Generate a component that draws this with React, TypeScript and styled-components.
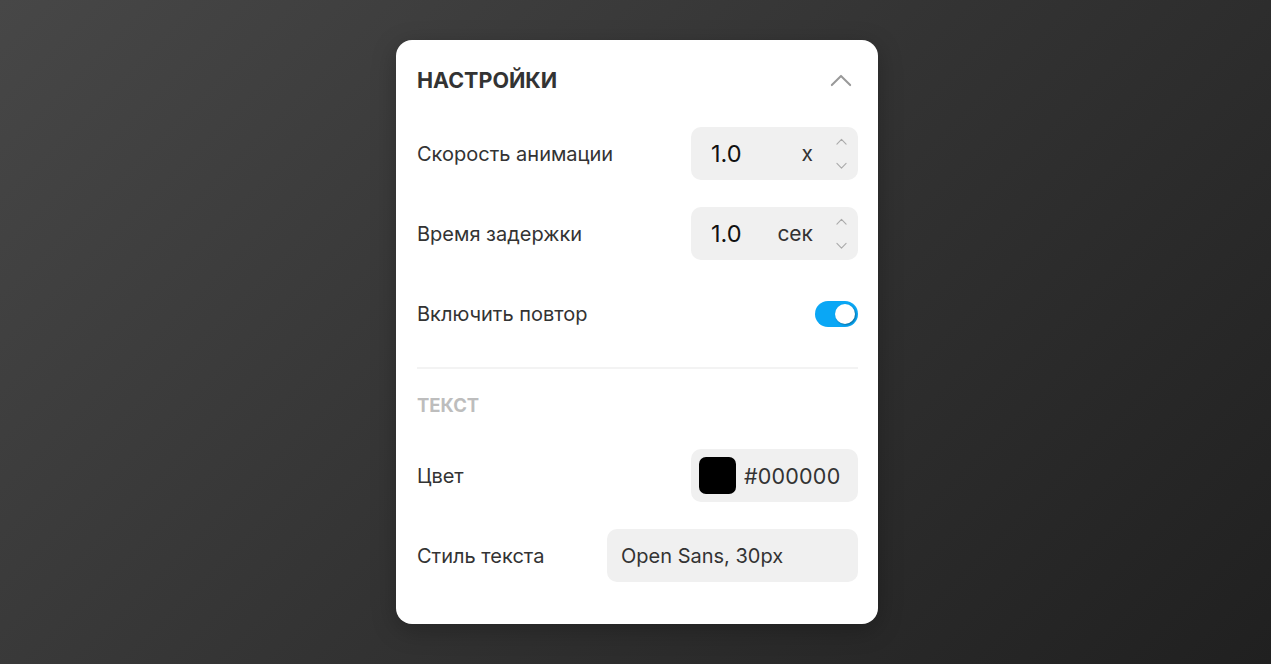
import React, { useState } from "react";
import styled, { createGlobalStyle } from "styled-components";

const GlobalStyle = createGlobalStyle`
  html, body {
    margin: 0;
    height: 100%;
  }
  body {
    font-family: Inter, "Noto Sans", sans-serif;
    background: linear-gradient(135deg, #474747 0%, #333 50%, #202020 100%);
  }
  #root {
    min-height: 100%;
  }
`;

const Page = styled.main`
  min-height: 664px;
  display: flex;
  justify-content: center;
  align-items: flex-start;
  padding-top: 40px;
  box-sizing: border-box;
`;

const Card = styled.section`
  width: 482px;
  margin-left: 3px;
  box-sizing: border-box;
  background: #fff;
  border-radius: 16px;
  padding: 22px 20px 42px 21px;
  box-shadow: 0 6px 24px rgba(0, 0, 0, 0.25);
`;

const Header = styled.header`
  display: flex;
  justify-content: space-between;
  align-items: center;
  height: 36px;
  margin-bottom: 29px;
`;

const Title = styled.h2`
  margin: 0;
  font-size: 21.5px;
  font-weight: 700;
  color: #333;
`;

const Collapse = styled.button`
  border: 0;
  background: none;
  padding: 0;
  width: 26px;
  height: 26px;
  display: flex;
  align-items: center;
  justify-content: center;
  margin-right: 4px;
  cursor: pointer;
`;

const Row = styled.div`
  display: flex;
  align-items: center;
  justify-content: space-between;
  height: 53px;
  & + & {
    margin-top: 27px;
  }
`;

const Label = styled.span`
  font-size: 20px;
  color: #333;
`;

const Field = styled.div<{ $width?: number }>`
  width: ${({ $width }) => $width ?? 167}px;
  height: 53px;
  box-sizing: border-box;
  background: #f0f0f0;
  border-radius: 10px;
  display: flex;
  align-items: center;
`;

const NumberValue = styled.span`
  font-size: 23.5px;
  color: #111;
  margin-left: 20px;
  flex: 1;
`;

const Unit = styled.span`
  font-size: 21px;
  color: #333;
  margin-right: 22px;
`;

const Stepper = styled.div`
  display: flex;
  flex-direction: column;
  justify-content: center;
  align-items: center;
  gap: 16px;
  width: 12px;
  margin-right: 11px;
`;

const Toggle = styled.button<{ $on: boolean }>`
  width: 43px;
  height: 26px;
  border-radius: 13px;
  border: 0;
  padding: 0;
  background: ${({ $on }) => ($on ? "#0aa7f5" : "#ccc")};
  display: flex;
  align-items: center;
  justify-content: ${({ $on }) => ($on ? "flex-end" : "flex-start")};
  cursor: pointer;
`;

const Knob = styled.span`
  width: 20px;
  height: 20px;
  border-radius: 50%;
  background: #fff;
  margin: 0 3px;
  box-shadow: 1px 1px 2px rgba(0, 0, 0, 0.35);
`;

const Divider = styled.hr`
  border: 0;
  height: 2px;
  background: #f3f3f3;
  margin: 27px 0 24px;
`;

const SectionTitle = styled.h3`
  margin: 0 0 32px;
  font-size: 18.5px;
  font-weight: 700;
  color: #bdbdbd;
  height: 24px;
  line-height: 24px;
`;

const Swatch = styled.span<{ $color: string }>`
  width: 37px;
  height: 37px;
  border-radius: 7px;
  background: ${({ $color }) => $color};
  margin: 0 8px;
`;

const ColorText = styled.span`
  font-size: 21.5px;
  color: #333;
  letter-spacing: 0.2px;
`;

const FontText = styled.span`
  font-size: 20px;
  color: #333;
  margin-left: 14px;
`;

const Chevron = ({ up, size, color, weight = 2.2 }: { up: boolean; size: number; color: string; weight?: number }) => (
  <svg width={size} height={size / 2 + 2} viewBox="0 0 24 14" fill="none">
    <path
      d={up ? "M2 12 L12 2 L22 12" : "M2 2 L12 12 L22 2"}
      stroke={color}
      strokeWidth={weight}
      strokeLinecap="round"
      strokeLinejoin="round"
    />
  </svg>
);

const NumberField = ({ value, unit }: { value: string; unit: string }) => (
  <Field>
    <NumberValue>{value}</NumberValue>
    <Unit>{unit}</Unit>
    <Stepper>
      <Chevron up size={11} color="#aaa" weight={2.4} />
      <Chevron up={false} size={11} color="#aaa" weight={2.4} />
    </Stepper>
  </Field>
);

export default function App() {
  const [repeat, setRepeat] = useState(true);
  return (
    <>
      <GlobalStyle />
      <Page>
        <Card>
          <Header>
            <Title>НАСТРОЙКИ</Title>
            <Collapse aria-label="Свернуть">
              <Chevron up size={22} color="#999" />
            </Collapse>
          </Header>
          <Row>
            <Label>Скорость анимации</Label>
            <NumberField value="1.0" unit="x" />
          </Row>
          <Row>
            <Label>Время задержки</Label>
            <NumberField value="1.0" unit="сек" />
          </Row>
          <Row>
            <Label>Включить повтор</Label>
            <Toggle $on={repeat} onClick={() => setRepeat(!repeat)}>
              <Knob />
            </Toggle>
          </Row>
          <Divider />
          <SectionTitle>ТЕКСТ</SectionTitle>
          <Row>
            <Label>Цвет</Label>
            <Field>
              <Swatch $color="#000" />
              <ColorText>#000000</ColorText>
            </Field>
          </Row>
          <Row>
            <Label>Стиль текста</Label>
            <Field $width={251}>
              <FontText>Open Sans, 30px</FontText>
            </Field>
          </Row>
        </Card>
      </Page>
    </>
  );
}
